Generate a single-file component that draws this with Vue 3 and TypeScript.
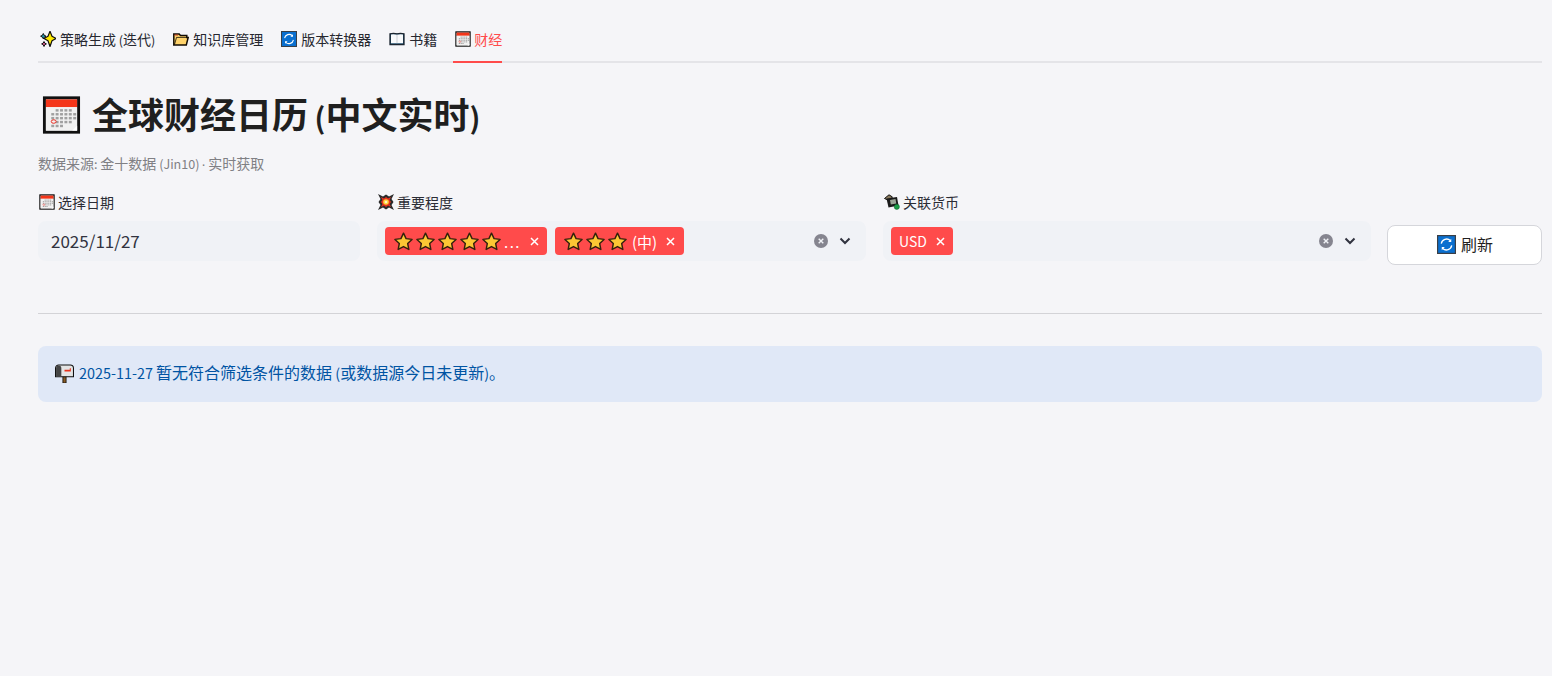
<script setup lang="ts">
interface Tab { label: string; icon: string; active?: boolean }
const tabs: Tab[] = [
  { label: '策略生成 (迭代)', icon: 'i-spark' },
  { label: '知识库管理', icon: 'i-folder' },
  { label: '版本转换器', icon: 'i-refresh' },
  { label: '书籍', icon: 'i-book' },
  { label: '财经', icon: 'i-cal', active: true },
]
interface Seg { text: string; latin: boolean }
function segs(text: string): Seg[] {
  const parts = text.match(/[\x00-\x7f]+|[^\x00-\x7f]+/g) ?? []
  return parts.map((p) => ({ text: p, latin: /^[\x00-\x7f]/.test(p) }))
}
</script>

<template>
  <main class="page">
    <svg class="defs" aria-hidden="true">
      <defs>
        <symbol id="i-star" viewBox="0 0 20 20">
          <path d="M10 1.2l2.7 5.8 6.3.8-4.6 4.3 1.2 6.3L10 15.300l-5.600 3.100 1.200-6.300L1 7.800l6.300-.8z" fill="#fcc734" stroke="#33220c" stroke-width="1.500" stroke-linejoin="round" />
        </symbol>
        <symbol id="i-spark" viewBox="0 0 16 16">
          <path d="M10 .3l2 5 4 2.200-4 2.200-2 5.800-2-5.800-4-2.200 4-2.200z" fill="#ffea00" stroke="#111" stroke-width="1.200" stroke-linejoin="round" />
          <path d="M3.300 2.500l.9 1.800 1.800.9-1.800.9-.9 1.800-.9-1.800-1.800-.9 1.800-.9z" fill="#1d9bb5" stroke="#111" stroke-width="1" />
          <path d="M4 10.500l.8 1.600 1.600.8-1.600.8-.8 1.800-.8-1.800-1.600-.8 1.600-.8z" fill="#e0558f" stroke="#111" stroke-width="1" />
        </symbol>
        <symbol id="i-folder" viewBox="0 0 16 16">
          <path d="M.8 3h5.400l1.300 1.400h6.300v2h1.400L13.300 14H.8z" fill="#ffd36b" stroke="#120c04" stroke-width="1.500" stroke-linejoin="miter" />
          <path d="M1.500 13.500L3.500 6.400H14" fill="none" stroke="#120c04" stroke-width=".8" />
          <path d="M1.500 3.500h3.500v1H1.500z" fill="#c0392b" />
        </symbol>
        <symbol id="i-refresh" viewBox="0 0 16 16">
          <rect x=".5" y=".5" width="15" height="15" fill="#0a6fcf" stroke="#3a3f46" />
          <path d="M3.600 7.200a4.500 4.500 0 0 1 7.600-2.500M12.400 8.800a4.500 4.500 0 0 1-7.600 2.500" fill="none" stroke="#fff" stroke-width="1.100" />
          <path d="M12 3.200v2.600H9.400zM4 12.800v-2.600h2.600z" fill="#fff" />
        </symbol>
        <symbol id="i-book" viewBox="0 0 16 16">
          <path d="M1 2.800Q4.500 1.800 8 2.800 11.500 1.800 15 2.800V13.700H1z" fill="#1f4a68" stroke="#1b2530" stroke-width="1.300" />
          <path d="M2 3.400Q5 2.800 8 3.700 11 2.800 14 3.400V12.300H2z" fill="#f8fafc" />
          <path d="M8 3.700v8.600" stroke="#aeb6bd" stroke-width=".6" />
        </symbol>
        <symbol id="i-cal" viewBox="0 0 40 40">
          <rect x="1" y="1" width="38" height="38" fill="#8a8a8a" />
          <rect x="2.500" y="2.500" width="35" height="35" fill="#fff" stroke="#111" stroke-width="3" />
          <rect x="4" y="4" width="32" height="8" fill="#f4361a" />
          <rect x="4" y="12" width="32" height="24" fill="#f1f1f1" />
          <g fill="#a0a0a0">
            <rect x="14" y="14" width="3" height="2.500" /><rect x="18.500" y="14" width="3" height="2.500" /><rect x="23" y="14" width="3" height="2.500" /><rect x="27.500" y="14" width="3" height="2.500" />
            <rect x="9.500" y="18" width="3" height="2.500" /><rect x="14" y="18" width="3" height="2.500" /><rect x="18.500" y="18" width="3" height="2.500" /><rect x="23" y="18" width="3" height="2.500" /><rect x="27.500" y="18" width="3" height="2.500" /><rect x="32" y="18" width="3" height="2.500" />
            <rect x="9.500" y="22" width="3" height="2.500" /><rect x="14" y="22" width="3" height="2.500" /><rect x="18.500" y="22" width="3" height="2.500" /><rect x="23" y="22" width="3" height="2.500" /><rect x="27.500" y="22" width="3" height="2.500" /><rect x="32" y="22" width="3" height="2.500" />
            <rect x="14" y="26" width="3" height="2.500" /><rect x="18.500" y="26" width="3" height="2.500" /><rect x="23" y="26" width="3" height="2.500" /><rect x="27.500" y="26" width="3" height="2.500" />
            <rect x="9.500" y="30" width="3" height="2.500" /><rect x="14" y="30" width="3" height="2.500" /><rect x="18.500" y="30" width="3" height="2.500" />
          </g>
          <ellipse cx="12" cy="26.700" rx="2.500" ry="1.800" fill="#f1f1f1" stroke="#e9281c" stroke-width="1" />
          <path d="M36 31v5h-5z" fill="#fff" />
        </symbol>
        <symbol id="i-boom" viewBox="0 0 16 16">
          <path d="M0 0l5 2.500L8 .5l3 2L16 0l-2.500 5L15.500 8l-2 3L16 16l-5-2.500-3 2-3-2L0 16l2.500-5L.5 8l2-3z" fill="#2a2a2a" />
          <path d="M3 3l3 1.500L8 3l2 1.500L13 3l-1.500 3L13 8l-1.500 2L13 13l-3-1.500L8 13l-2-1.500L3 13l1.500-3L3 8l1.500-2z" fill="#e8321c" />
          <circle cx="8" cy="8" r="2.800" fill="#ffd23a" />
          <circle cx="8" cy="8" r="1.300" fill="#fff5c4" />
        </symbol>
        <symbol id="i-money" viewBox="0 0 16 16">
          <path d="M.5 4.500L5 .8l3.500 2.200-3.500 3.500z" fill="#8a7a5e" stroke="#111" stroke-width="1" />
          <path d="M2.500 4.500l10.500-1.500 1.500 8.500-10 2z" fill="#1a1a1a" />
          <path d="M6 6l5.500-1 .8 4.600-5.500 1z" fill="#9aa596" />
          <circle cx="12.800" cy="12.800" r="2.600" fill="#1a9c45" stroke="#0c5c28" stroke-width=".5" />
        </symbol>
        <symbol id="i-mail" viewBox="0 0 18 18">
          <path d="M7.500 11h3v7h-3z" fill="#8a5a22" stroke="#111" stroke-width=".8" />
          <path d="M3.500 1h11a3 3 0 0 1 3 3v8H.5V4a3 3 0 0 1 3-3z" fill="#e4e4e4" stroke="#111" stroke-width="1" />
          <path d="M3.500 1.500A2.500 2.500 0 0 1 6 4v7.500H1V4a2.500 2.500 0 0 1 2.500-2.500z" fill="#444" />
          <path d="M9 5.500h5v-1.500h1v3H9z" fill="#e8321c" />
        </symbol>
        <symbol id="i-x" viewBox="0 0 9 9">
          <path d="M1 1l7 7M8 1L1 8" fill="none" stroke="#fff" stroke-width="1.500" />
        </symbol>
      </defs>
    </svg>

    <nav class="tabs">
      <button v-for="t in tabs" :key="t.label" class="tab" :class="{ active: t.active }" type="button">
        <svg class="emoji"><use :href="'#' + t.icon" /></svg>
        <span><span v-for="(s, i) in segs(t.label)" :key="i" :class="{ lat: s.latin }">{{ s.text }}</span></span>
      </button>
    </nav>

    <h1 class="title">
      <svg class="title-icon"><use href="#i-cal" /></svg>
      <span><span v-for="(s, i) in segs('全球财经日历 (中文实时)')" :key="i" :class="{ lat: s.latin }">{{ s.text }}</span></span>
    </h1>
    <p class="caption">
      <span v-for="(s, i) in segs('数据来源: 金十数据 (Jin10) ')" :key="i" :class="{ lat: s.latin }">{{ s.text }}</span><span class="dot">·</span> 实时获取
    </p>

    <section class="filters">
      <div class="field">
        <label class="label"><svg class="emoji"><use href="#i-cal" /></svg>选择日期</label>
        <div class="box date">2025/11/27</div>
      </div>
      <div class="field">
        <label class="label"><svg class="emoji"><use href="#i-boom" /></svg>重要程度</label>
        <div class="box select">
          <span class="chip wide">
            <span class="chip-text">
              <svg v-for="n in 5" :key="n" class="star"><use href="#i-star" /></svg>
              <span class="dots">...</span>
            </span>
            <svg class="x"><use href="#i-x" /></svg>
          </span>
          <span class="chip">
            <span class="chip-text">
              <svg v-for="n in 3" :key="n" class="star"><use href="#i-star" /></svg>
              <span class="mid">(中)</span>
            </span>
            <svg class="x"><use href="#i-x" /></svg>
          </span>
          <span class="controls">
            <svg class="clear" viewBox="0 0 14 14"><circle cx="7" cy="7" r="7" fill="#85858f" /><path d="M4.700 4.700l4.600 4.600M9.300 4.700l-4.600 4.600" stroke="#f0f2f6" stroke-width="1.400" /></svg>
            <svg class="chev" viewBox="0 0 12 8"><path d="M1.500 1.500L6 6l4.500-4.500" fill="none" stroke="#31333f" stroke-width="2" /></svg>
          </span>
        </div>
      </div>
      <div class="field">
        <label class="label"><svg class="emoji"><use href="#i-money" /></svg>关联货币</label>
        <div class="box select">
          <span class="chip">
            <span class="chip-text">USD</span>
            <svg class="x"><use href="#i-x" /></svg>
          </span>
          <span class="controls">
            <svg class="clear" viewBox="0 0 14 14"><circle cx="7" cy="7" r="7" fill="#85858f" /><path d="M4.700 4.700l4.600 4.600M9.300 4.700l-4.600 4.600" stroke="#f0f2f6" stroke-width="1.400" /></svg>
            <svg class="chev" viewBox="0 0 12 8"><path d="M1.500 1.500L6 6l4.500-4.500" fill="none" stroke="#31333f" stroke-width="2" /></svg>
          </span>
        </div>
      </div>
      <button class="refresh" type="button">
        <svg class="refresh-icon"><use href="#i-refresh" /></svg>
        <span>刷新</span>
      </button>
    </section>

    <hr class="rule" />

    <div class="alert">
      <svg class="alert-icon"><use href="#i-mail" /></svg>
      <span><span v-for="(s, i) in segs('2025-11-27 暂无符合筛选条件的数据 (或数据源今日未更新)。')" :key="i" :class="{ lat: s.latin }">{{ s.text }}</span></span>
    </div>
  </main>
</template>

<style>
html, body { background: #f5f5f8; }
</style>

<style scoped>
.page {
  box-sizing: border-box;
  width: 1552px;
  height: 676px;
  padding: 18px 10px 0 38px;
  overflow: hidden;
  background: #f5f5f8;
  color: #1f1f1f;
  font-family: "Noto Sans CJK SC", "Noto Sans", sans-serif;
}
.defs { position: absolute; width: 0; height: 0; }
.lat { font-size: .9em; }
.tabs {
  display: flex;
  gap: 16px;
  height: 45px;
  box-sizing: border-box;
  border-bottom: 2px solid #e4e4e8;
}
.tab {
  display: flex;
  align-items: center;
  gap: 4px;
  height: 45px;
  padding: 0 0 2px 2px;
  border: 0;
  border-bottom: 2px solid transparent;
  background: none;
  color: #26272f;
  font: inherit;
  font-size: 14px;
  white-space: nowrap;
}
.tab.active { color: #ff4b4b; border-bottom-color: #ff4b4b; gap: 3px; }
.emoji { width: 16px; height: 16px; flex: none; }
.title {
  display: flex;
  align-items: center;
  gap: 11px;
  height: 54px;
  margin: 25px 0 0;
  padding-left: 4px;
  font-size: 36px;
  font-weight: 700;
  line-height: 54px;
  color: #1f1f1f;
}
.title .lat { font-size: .8em; }
.title-icon { width: 39px; height: 40px; flex: none; }
.caption {
  margin: 11px 0 0;
  font-size: 14px;
  line-height: 20px;
  color: #808084;
  white-space: pre-wrap;
}
.caption .dot { margin: 0 -1px; font-family: "Liberation Sans", sans-serif; }
.filters {
  display: grid;
  grid-template-columns: 322fr 489fr 488fr 154fr;
  gap: 17px;
  margin-top: 18px;
  align-items: start;
}
.field { display: flex; flex-direction: column; min-width: 0; }
.label {
  display: flex;
  align-items: center;
  gap: 3px;
  height: 20px;
  margin-bottom: 9px;
  padding-left: 1px;
  font-size: 14px;
  color: #2b2c35;
}
.box {
  box-sizing: border-box;
  height: 40px;
  border-radius: 8px;
  background: #f0f2f6;
}
.date {
  padding: 0 13px;
  font-size: 17px;
  line-height: 39px;
  color: #31333f;
}
.select {
  display: flex;
  align-items: center;
  gap: 8px;
  padding: 0 8px;
}
.chip {
  display: flex;
  align-items: center;
  height: 28px;
  padding: 0 8px;
  gap: 9px;
  border-radius: 4px;
  background: #ff4b4b;
  color: #fff;
  font-size: 14px;
  white-space: nowrap;
}
.chip:has(.star) { padding: 0 9px; }
.chip.wide { width: 162px; box-sizing: border-box; justify-content: space-between; }
.chip-text { display: flex; align-items: center; gap: 3px; }
.star { width: 19px; height: 19px; }
.chip-text .dots { letter-spacing: 1.5px; font-size: 15px; }
.chip-text .mid { margin-left: 2px; font-size: 15px; }
.x { width: 9px; height: 9px; flex: none; }
.controls {
  display: flex;
  align-items: center;
  gap: 11px;
  margin-left: auto;
  padding-right: 7px;
}
.clear { width: 14px; height: 14px; }
.chev { width: 12px; height: 8px; }
.refresh {
  display: flex;
  align-items: center;
  justify-content: center;
  gap: 5px;
  height: 40px;
  margin: 33px 0 0 -1px;
  padding: 0 0 2px 1px;
  border: 1px solid #d5d6db;
  border-radius: 8px;
  background: #fff;
  color: #1f1f1f;
  font: inherit;
  font-size: 16px;
}
.refresh-icon { width: 19px; height: 19px; }
.rule {
  margin: 48px 0 0;
  border: 0;
  border-top: 1px solid #d3d3d7;
}
.alert {
  display: flex;
  align-items: center;
  gap: 5px;
  height: 56px;
  margin-top: 32px;
  padding: 0 17px 4px;
  box-sizing: border-box;
  border-radius: 8px;
  background: #e0e8f7;
  color: #0054a3;
  font-size: 16px;
}
.alert-icon { width: 19px; height: 19px; margin-top: 3px; }
</style>
